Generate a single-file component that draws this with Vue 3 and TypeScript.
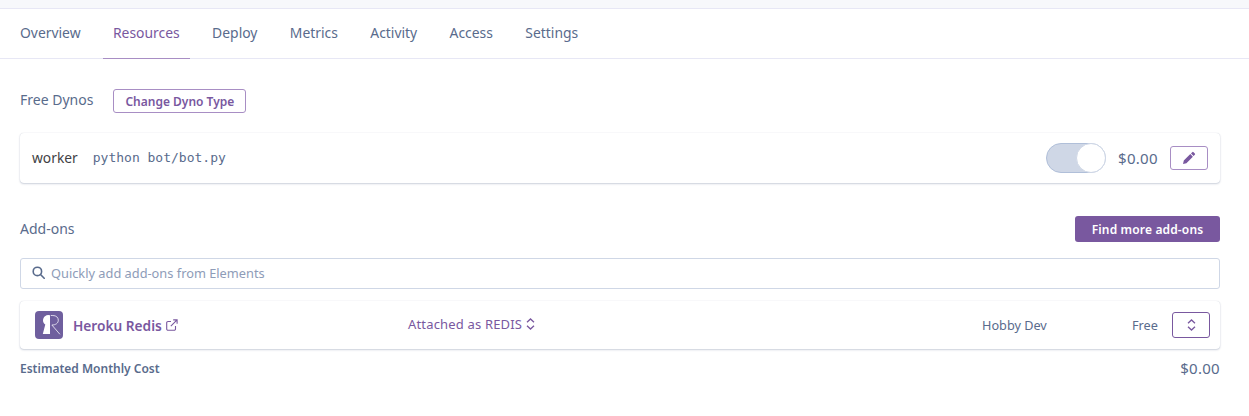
<script setup lang="ts">
const tabs: string[] = ['Overview', 'Resources', 'Deploy', 'Metrics', 'Activity', 'Access', 'Settings']
</script>

<template>
  <div class="page">
    <div class="topband"></div>
    <nav class="tabs">
      <a v-for="t in tabs" :key="t" class="tab" :class="{ active: t === 'Resources' }">{{ t }}</a>
    </nav>
    <main class="content">
      <div class="dyno-head">
        <span class="label free-label">Free Dynos</span>
        <button class="btn-outline change">Change Dyno Type</button>
      </div>
      <div class="card dyno">
        <span class="worker">worker</span>
        <code class="cmd">python bot/bot.py</code>
        <span class="spacer"></span>
        <span class="toggle"><span class="knob"></span></span>
        <span class="price">$0.00</span>
        <button class="btn-outline edit">
          <svg width="14" height="14" viewBox="0 0 14 14"><path d="M10.200 1.200a1 1 0 0 1 1.400 0l1.200 1.200a1 1 0 0 1 0 1.400L11.600 5 9 2.400zM8.300 3.100 10.900 5.700 4.400 12.200 1 13l.8-3.400z" fill="#79589f"/></svg>
        </button>
      </div>
      <div class="addons-head">
        <span class="label addons-label">Add-ons</span>
        <button class="btn-find">Find more add-ons</button>
      </div>
      <div class="search">
        <svg width="13" height="13" viewBox="0 0 13 13" fill="none" stroke="#596b8c" stroke-width="1.600"><circle cx="5.400" cy="5.400" r="4.200"/><path d="m8.500 8.500 3.700 3.700" stroke-linecap="round"/></svg>
        <span class="placeholder">Quickly add add-ons from Elements</span>
      </div>
      <div class="card addon">
        <div class="col-name">
          <svg class="logo" width="28" height="28" viewBox="0 0 28 28">
            <rect width="28" height="28" rx="4" fill="#6f5f9e"/>
            <path d="M15 4.300a5.300 5.300 0 0 0-5 .9C7.300 7.200 7.400 11.800 10.300 13.600L7.800 23H15z" fill="#fff" />
            <path d="M15.800 4.500h2c3.500 0 5.500 2 5.500 4.700 0 2.900-2.500 4.800-6.400 4.800l8 9.300" fill="none" stroke="#e8e4f2" stroke-width=".9"/>
          </svg>
          <a class="addon-name">Heroku Redis</a>
          <svg class="ext" width="12" height="12" viewBox="0 0 12 12" fill="none" stroke="#79589f" stroke-width="1.100"><path d="M9.500 7v3a1.300 1.300 0 0 1-1.300 1.300H2A1.300 1.300 0 0 1 .7 10V3.800A1.300 1.300 0 0 1 2 2.500h3"/><path d="M4.800 7.200 10.800 1.200M7.200.9h3.900v3.900"/></svg>
        </div>
        <div class="col-attached">
          <span>Attached as REDIS</span>
          <svg width="9" height="12" viewBox="0 0 9 12" fill="none" stroke="#79589f" stroke-width="1.300"><path d="M1 4.300 4.500 1 8 4.300M1 7.700 4.500 11 8 7.700"/></svg>
        </div>
        <span class="plan">Hobby Dev</span>
        <span class="free">Free</span>
        <button class="btn-outline updown">
          <svg width="9" height="12" viewBox="0 0 9 12" fill="none" stroke="#79589f" stroke-width="1.300"><path d="M1 4.300 4.500 1 8 4.300M1 7.700 4.500 11 8 7.700"/></svg>
        </button>
      </div>
      <div class="estimate">
        <span class="est-label">Estimated Monthly Cost</span>
        <span class="est-price">$0.00</span>
      </div>
    </main>
  </div>
</template>

<style>
html, body { margin: 0; background: #fff; }
</style>

<style scoped>
.page { width: 1249px; height: 416px; overflow: hidden; font-family: "Noto Sans", sans-serif; font-size: 14px; color: #596b8c; background: #fff; }
.topband { height: 8px; background: #f7f8fb; border-bottom: 1px solid #e7e7f5; }
.tabs { display: flex; height: 49px; padding-left: 10px; border-bottom: 1px solid #e7e7f5; }
.tab { padding: 0 10px; margin-right: 12.400px; height: 50px; line-height: 48px; box-sizing: border-box; color: #596b8c; white-space: nowrap; font-size: 13.900px; }
.tab.active { color: #79589f; border-bottom: 1px solid #a88ec4; }
.content { padding: 0 29px 0 20px; }
.dyno-head { display: flex; align-items: center; gap: 20px; height: 24px; margin-top: 30px; }
.label { color: #596b8c; }
.free-label { margin-bottom: 4px; }
.addons-label { margin-bottom: 2px; }
.btn-outline { box-sizing: border-box; background: #fff; border: 1px solid #a88ec4; border-radius: 3px; color: #79589f; font-family: inherit; padding: 0; display: flex; align-items: center; justify-content: center; }
.change { width: 133px; height: 24px; font-size: 12px; font-weight: 600; }
.card { box-sizing: border-box; display: flex; align-items: center; background: #fff; border-radius: 4px; box-shadow: 0 1px 2px rgba(89, 107, 140, .3), 0 0 1px rgba(89, 107, 140, .25); }
.dyno { height: 50px; margin-top: 20px; padding: 0 12px; }
.worker { color: #3f3f44; font-size: 13.800px; margin-bottom: 2px; }
.cmd { font-family: "DejaVu Sans Mono", monospace; font-size: 13px; margin-left: 15px; color: #596b8c; margin-bottom: 2px; }
.spacer { flex: 1; }
.toggle { box-sizing: border-box; width: 60px; height: 30px; border-radius: 15px; background: #cfd7e6; border: 1px solid #b0bfd9; position: relative; }
.knob { position: absolute; right: -1px; top: -1px; width: 30px; height: 30px; border-radius: 50%; background: #fff; box-sizing: border-box; border: 1px solid #cfd7e6; }
.price { margin-left: 12px; width: 40px; color: #596b8c; font-size: 15px; letter-spacing: .3px; white-space: nowrap; }
.edit { width: 38px; height: 24px; margin-left: 12px; }
.addons-head { display: flex; align-items: center; justify-content: space-between; height: 26px; margin-top: 33px; }
.btn-find { box-sizing: border-box; width: 145px; height: 26px; border: 0; border-radius: 3px; background: #79589f; color: #fff; font-family: inherit; font-size: 12px; font-weight: 600; padding: 0; letter-spacing: .15px; }
.search { box-sizing: border-box; display: flex; align-items: center; gap: 6px; height: 31px; margin-top: 16px; padding-left: 11px; border: 1px solid #cfd7e6; border-radius: 3px; }
.search svg { margin-bottom: 2px; }
.placeholder { font-size: 12.800px; color: #8e9cb8; margin-bottom: 2px; }
.addon { height: 48px; margin-top: 12px; padding: 0 10px 0 15px; }
.col-name { display: flex; align-items: center; width: 373px; }
.addon-name { margin-left: 10px; font-weight: 600; color: #79589f; font-size: 13.700px; }
.ext { margin-left: 4px; }
.col-attached { display: flex; align-items: center; gap: 4px; width: 574px; color: #79589f; font-size: 13px; letter-spacing: .17px; margin-bottom: 2px; }
.plan { width: 150px; font-size: 12.700px; color: #596b8c; white-space: nowrap; }
.free { width: 40px; font-size: 12.700px; white-space: nowrap; }
.updown { width: 38px; height: 26px; border-color: #79589f; }
.estimate { display: flex; align-items: center; justify-content: space-between; margin-top: 9px; height: 20px; }
.est-label { font-size: 12px; font-weight: 600; color: #596b8c; }
.est-price { font-size: 15px; letter-spacing: .3px; }
</style>
